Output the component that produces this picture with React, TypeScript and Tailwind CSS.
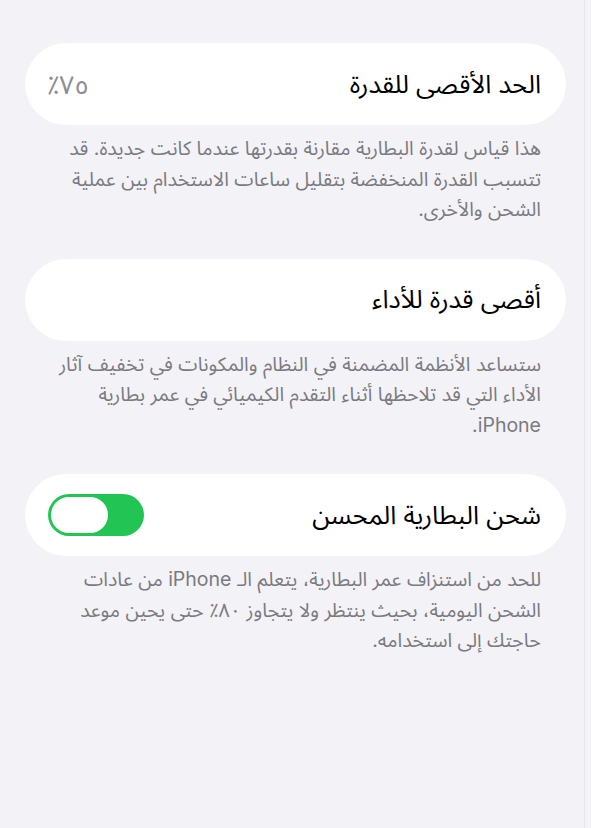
import React, { useState } from "react";

const font = {
  fontFamily: 'Inter, "Noto Sans Arabic", "DejaVu Sans", sans-serif',
};

interface SectionProps {
  title: string;
  footer: string;
  value?: string;
  toggle?: boolean;
}

function Toggle({ on, onChange }: { on: boolean; onChange: () => void }) {
  // RTL switch: knob sits on the left when on
  return (
    <button
      type="button"
      onClick={onChange}
      className={`flex h-[42px] w-[96px] items-center rounded-full p-[3px] ${
        on ? "justify-start bg-[#22c553]" : "justify-end bg-[#e4e4e9]"
      }`}
    >
      <span className="h-[36px] w-[57px] rounded-full bg-white" />
    </button>
  );
}

function Section({ title, footer, value, toggle }: SectionProps) {
  const [on, setOn] = useState(true);
  return (
    <section className="mb-[34px]">
      <div className="flex h-[82px] items-center justify-between rounded-full bg-white px-[25px]">
        <span className="text-[25.5px] text-black">{title}</span>
        {value && (
          <span className="-ml-[3px] text-[26px] text-[#8e8e93]">{value}</span>
        )}
        {toggle && (
          <span dir="ltr" className="-ml-[2px] flex">
            <Toggle on={on} onChange={() => setOn(!on)} />
          </span>
        )}
      </div>
      <p className="mt-[8px] px-[25px] text-[19.5px] leading-[30.5px] text-[#7a7a7f]">
        {footer}
      </p>
    </section>
  );
}

export default function App() {
  return (
    <div dir="rtl" style={font} className="flex min-h-[828px] bg-[#f2f2f7]">
      <div className="w-[6px] bg-[#f4f4f8]" />
      <div className="w-[1px] bg-[#e5e5ea]" />
      <main className="flex-1 pl-[25px] pr-[18px] pt-[43px]">
        <Section
          title="الحد الأقصى للقدرة"
          value="٧٥٪"
          footer="هذا قياس لقدرة البطارية مقارنة بقدرتها عندما كانت جديدة. قد تتسبب القدرة المنخفضة بتقليل ساعات الاستخدام بين عملية الشحن والأخرى."
        />
        <Section
          title="أقصى قدرة للأداء"
          footer="ستساعد الأنظمة المضمنة في النظام والمكونات في تخفيف آثار الأداء التي قد تلاحظها أثناء التقدم الكيميائي في عمر بطارية iPhone."
        />
        <Section
          title="شحن البطارية المحسن"
          toggle
          footer="للحد من استنزاف عمر البطارية، يتعلم الـ iPhone من عادات الشحن اليومية، بحيث ينتظر ولا يتجاوز ٨٠٪ حتى يحين موعد حاجتك إلى استخدامه."
        />
      </main>
    </div>
  );
}
